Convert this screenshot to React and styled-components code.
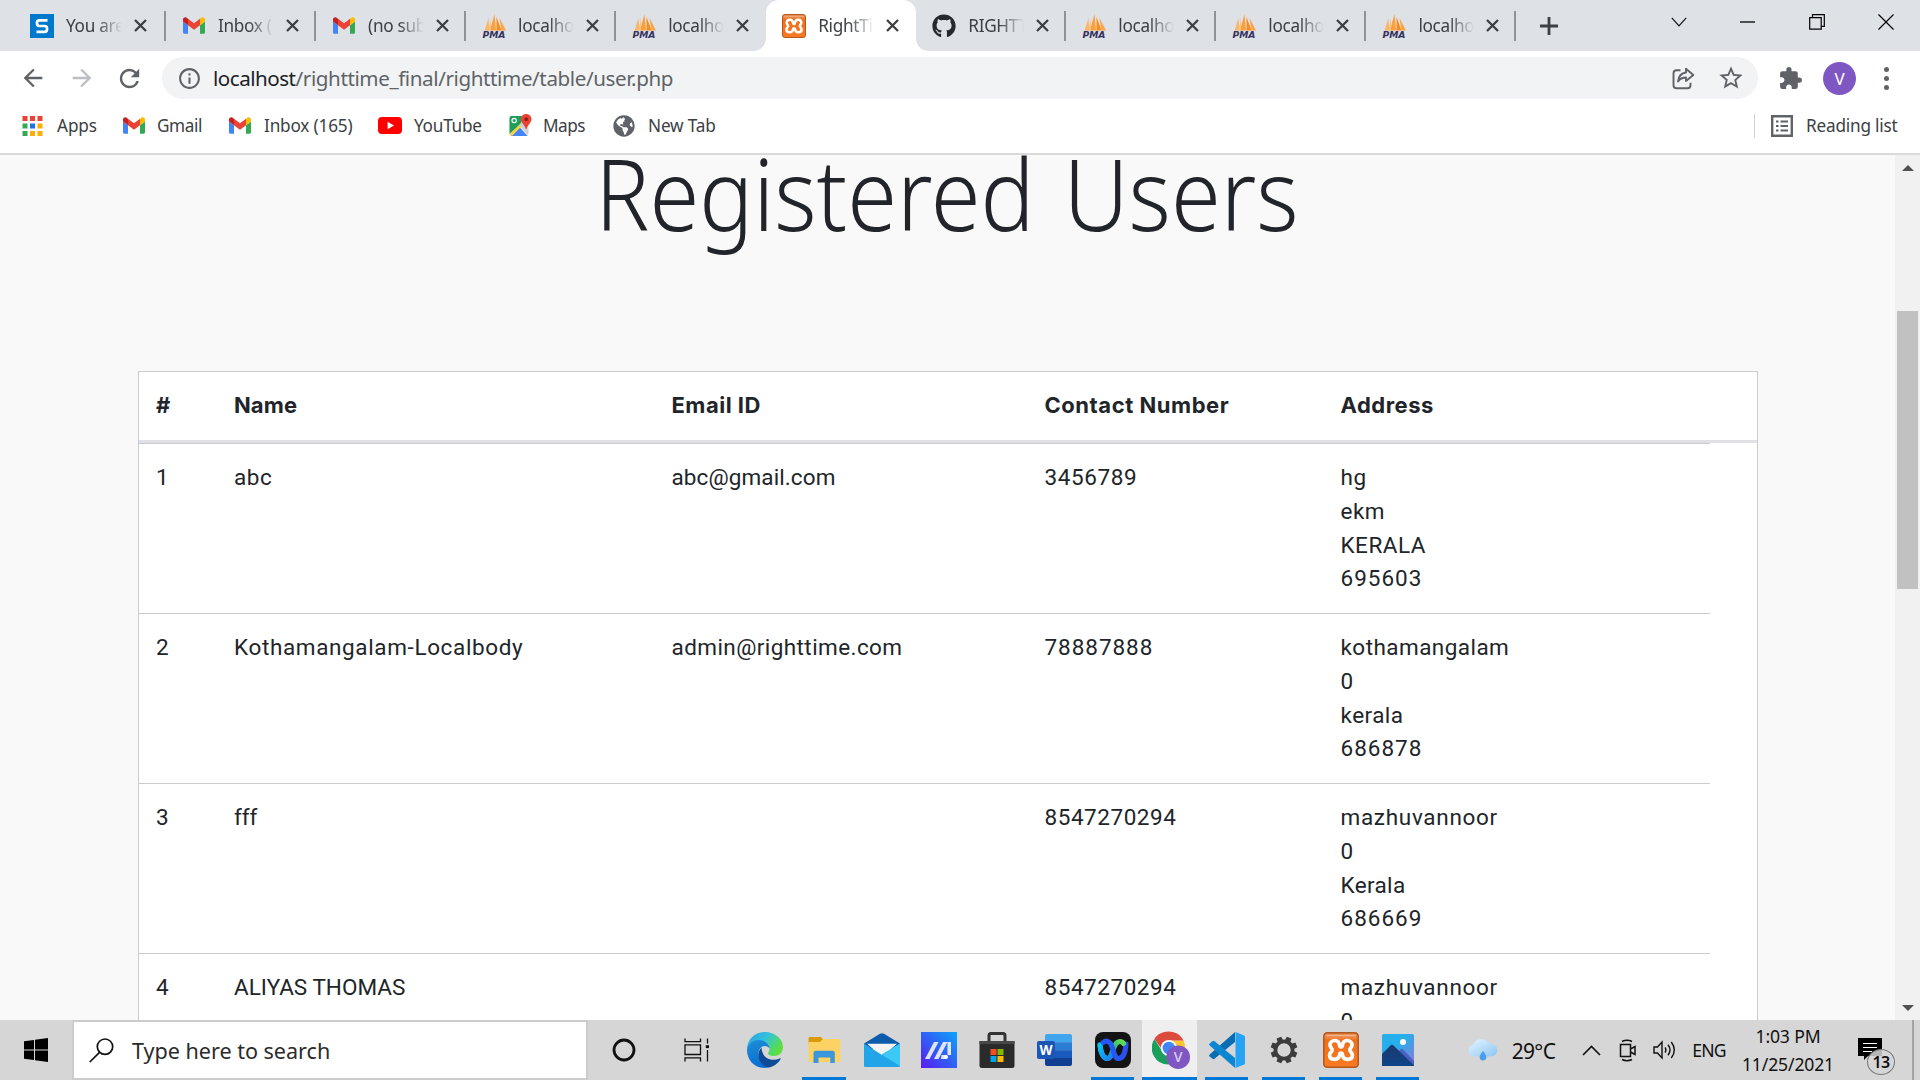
import React from "react";
import styled, { createGlobalStyle } from "styled-components";
import { FaGithub, FaGlobeAmericas } from "react-icons/fa";
import {
  MdArrowBack,
  MdArrowForward,
  MdRefresh,
  MdInfoOutline,
  MdStarBorder,
  MdExtension,
} from "react-icons/md";

const UI = `"Noto Sans", "Open Sans", sans-serif`;

const GlobalStyle = createGlobalStyle`
  * { box-sizing: border-box; }
  body { margin: 0; background: #fff; overflow: hidden; }
  svg { display: block; flex: none; }
`;

const Screen = styled.div`
  width: 1920px;
  height: 1080px;
  display: flex;
  flex-direction: column;
  overflow: hidden;
  font-family: ${UI};
`;

/* ---------- tab strip ---------- */
const TabStrip = styled.header`
  height: 51px;
  flex: none;
  display: flex;
  padding-left: 14px;
  background: #dee1e6;
`;
const Tab = styled.div`
  position: relative;
  width: ${(p) => (p.$first ? 152 : 150.05)}px;
  height: 51px;
  display: flex;
  align-items: center;
  padding-left: 15.5px;
  background: ${(p) => (p.$active ? "#fff" : "transparent")};
  border-radius: 13px 13px 0 0;
  &::before, &::after {
    content: "";
    display: ${(p) => (p.$active ? "block" : "none")};
    position: absolute;
    bottom: 0;
    width: 12px;
    height: 12px;
  }
  &::before { left: -12px; background: radial-gradient(circle at 0 0, transparent 11.5px, #fff 12px); }
  &::after { right: -12px; background: radial-gradient(circle at 100% 0, transparent 11.5px, #fff 12px); }
`;
const TabTitle = styled.span`
  width: 56px;
  margin-left: 12.5px;
  overflow: hidden;
  white-space: nowrap;
  font-size: 17.2px;
  line-height: 30px;
  letter-spacing: -0.3px;
  color: #3c4043;
  mask-image: linear-gradient(90deg, #000 55%, transparent 100%);
`;
const TabClose = styled.span`
  width: 13px;
  margin-left: 12px;
`;
const TabDivider = styled.span`
  width: 2px;
  height: 30px;
  margin-left: auto;
  background: ${(p) => (p.$show ? "#8f9296" : "transparent")};
`;
const NewTab = styled.div`
  width: 70px;
  display: flex;
  align-items: center;
  padding-left: 23px;
`;
const WindowControls = styled.div`
  margin-left: auto;
  display: flex;
  height: 43px;
  align-items: center;
`;
const WindowButton = styled.div`
  width: 69px;
  display: flex;
  justify-content: center;
`;

/* ---------- toolbar ---------- */
const Toolbar = styled.div`
  height: 54px;
  flex: none;
  display: flex;
  align-items: center;
  background: #fff;
  color: #5f6368;
`;
const NavButton = styled.div`
  width: ${(p) => p.$w || 49}px;
  display: flex;
  justify-content: center;
  color: ${(p) => (p.$off ? "#bcbec1" : "#5f6368")};
`;
const NavGroup = styled.div`
  width: 162px;
  display: flex;
  padding-left: 8px;
`;
const Omnibox = styled.div`
  width: 1596px;
  height: 42px;
  display: flex;
  align-items: center;
  padding: 0 13px 0 15px;
  border-radius: 21px;
  background: #f1f3f4;
`;
const Url = styled.div`
  flex: 1;
  margin-left: 11px;
  font-size: 20.6px;
  line-height: 30px;
  letter-spacing: -0.4px;
  color: #5f6368;
  b { font-weight: 400; color: #202124; letter-spacing: -0.5px; }
`;
const OmniActions = styled.div`
  display: flex;
  align-items: center;
  gap: 22px;
`;
const Avatar = styled.div`
  width: 33px;
  height: 33px;
  margin-left: 20px;
  border-radius: 50%;
  background: #7e57c2;
  color: #fff;
  font: 17px/33px ${UI};
  text-align: center;
`;
const ToolbarEnd = styled.div`
  display: flex;
  align-items: center;
  padding-left: 20px;
`;
const Kebab = styled.div`
  margin-left: 28px;
  display: grid;
  gap: 4px;
  i { width: 5px; height: 5px; border-radius: 50%; background: #5f6368; }
`;

/* ---------- bookmarks ---------- */
const BookmarkBar = styled.nav`
  height: 50px;
  flex: none;
  display: flex;
  align-items: center;
  padding: 0 0 7px 22px;
  border-bottom: 2px solid #dadada;
  background: #fff;
`;
const Bookmark = styled.div`
  width: ${(p) => p.$w}px;
  display: flex;
  align-items: center;
  gap: ${(p) => p.$gap || 12}px;
  white-space: nowrap;
  font-size: 17.2px;
  line-height: 26px;
  letter-spacing: ${(p) => p.$ls || -0.5}px;
  color: #3c4043;
`;
const BarDivider = styled.span`
  width: 1.5px;
  height: 24px;
  margin: 0 16px 0 auto;
  background: #d0d2d6;
`;

/* ---------- page ---------- */
const Viewport = styled.main`
  height: 865px;
  flex: none;
  display: flex;
  overflow: hidden;
  background: #f9f9f9;
`;
const Page = styled.div`
  width: 1895px;
  height: 865px;
  overflow: hidden;
  display: flex;
  flex-direction: column;
  align-items: center;
`;
const PageTitle = styled.h1`
  flex: none;
  margin: -12px 0 128px -1px;
  font-weight: 300;
  font-size: 99px;
  line-height: 100px;
  white-space: nowrap;
  word-spacing: 6px;
  color: #212529;
  transform: scaleX(0.911);
`;
const TableCard = styled.section`
  flex: none;
  width: 1620px;
  height: 900px;
  margin-left: 1px;
  border: 1px solid #ccc;
  background: #fff;
  font-family: Roboto, sans-serif;
  font-size: 22.5px;
  line-height: 33.75px;
  color: #212529;
`;
const Columns = styled.div`
  display: grid;
  grid-template-columns: 78px 437.5px 373px 296px 386px;
`;
const HeadRow = styled(Columns)`
  height: 71px;
  border-bottom: 3px solid #dee2e6;
  font-family: Inter, Roboto, sans-serif;
  font-weight: 700;
  font-size: 22px;
`;
const BodyRow = styled(Columns)`
  width: 1571px;
  height: 170px;
  border-top: 1px solid #c9cbcd;
`;
const Cell = styled.div`
  padding: 17px 0 0 17px;
  letter-spacing: ${(p) => p.$ls ?? 0}px;
  white-space: nowrap;
`;
const Line = styled.div`
  letter-spacing: ${(p) => p.$ls ?? 0.5}px;
`;

const ScrollBar = styled.aside`
  width: 25px;
  display: flex;
  flex-direction: column;
  align-items: center;
  background: #f1f1f1;
`;
const ScrollArrow = styled.span`
  width: 0;
  height: 0;
  border: 6px solid transparent;
  border-top-width: ${(p) => (p.$down ? 6 : 0)}px;
  border-bottom-width: ${(p) => (p.$down ? 0 : 6)}px;
  border-${(p) => (p.$down ? "top" : "bottom")}-color: #505050;
  margin: ${(p) => (p.$down ? "auto 0 9px" : "10px 0 0")};
`;
const ScrollThumb = styled.span`
  width: 21px;
  height: 278px;
  margin-top: 140px;
  background: #c1c1c1;
`;

/* ---------- taskbar ---------- */
const Taskbar = styled.footer`
  height: 60px;
  flex: none;
  display: flex;
  background: #d6d6d6;
`;
const TaskSlot = styled.div`
  width: ${(p) => p.$w || 58}px;
  height: 60px;
  display: flex;
  align-items: center;
  justify-content: center;
  background: ${(p) => (p.$focused ? "#efefef" : "transparent")};
`;
const RunningSlot = styled(TaskSlot)`
  margin: 0 ${(p) => (p.$focused ? 1 : 7)}px;
  width: ${(p) => (p.$focused ? 55 : p.$w || 43)}px;
  border-bottom: 3px solid #0078d7;
  padding: 3px 0 0 ${(p) => (p.$focused ? 2 : 0)}px;
`;
const SearchBox = styled.div`
  width: 516px;
  height: 60px;
  display: flex;
  align-items: center;
  gap: 18px;
  padding: 1px 0 0 15px;
  border: 2px solid #ccc;
  background: #fff;
  font-size: 21.6px;
  letter-spacing: -0.03px;
  color: #2b2b2b;
`;
const Tray = styled.div`
  margin-left: auto;
  display: flex;
  align-items: center;
  color: #111;
`;
const TrayItem = styled.div`
  width: ${(p) => p.$w}px;
  display: flex;
  justify-content: center;
  padding-top: ${(p) => p.$drop || 0}px;
  font-size: ${(p) => p.$size || 17.6}px;
  letter-spacing: ${(p) => p.$ls || -0.5}px;
  white-space: nowrap;
`;
const Clock = styled.div`
  width: 110px;
  font-size: 17.6px;
  line-height: 28px;
  text-align: center;
  letter-spacing: -0.15px;
`;
const Notices = styled.div`
  position: relative;
  width: 69px;
  height: 60px;
  padding: 17px 0 0 15px;
`;
const NoticeCount = styled.span`
  position: absolute;
  left: 24px;
  top: 29px;
  width: 28px;
  height: 26px;
  border: 1px solid #777;
  border-radius: 50%;
  background: rgba(214, 214, 214, 0.85);
  font: 600 16px/24px ${UI};
  letter-spacing: -0.6px;
  text-align: center;
`;
const DesktopEdge = styled.span`
  width: 8px;
  height: 60px;
  border-left: 2px solid #a3a3a3;
`;

/* ---------- icons ---------- */
const SIcon = () => (
  <svg width="24" height="24" viewBox="0 0 24 24">
    <path fill="#0078cb" d="M0 0h24v24H0z" />
    <path d="M17.5 6.3H9.2Q7 6.3 7 8.6v1Q7 12 9.2 12h5.4q2.4 0 2.4 2.2v1.3q0 2.3-2.4 2.3H6.5" fill="none" stroke="#fff" strokeWidth="2.7" />
  </svg>
);
const GmailIcon = () => (
  <svg width="22" height="17" viewBox="52 42 88 66">
    <path fill="#4285f4" d="M58 108h14V74L52 59v43c0 3.3 2.7 6 6 6" />
    <path fill="#34a853" d="M120 108h14c3.3 0 6-2.7 6-6V59l-20 15" />
    <path fill="#fbbc04" d="M120 48v26l20-15v-8c0-7.400-8.500-11.700-14.400-7.200" />
    <path fill="#ea4335" d="M72 74V48l24 18 24-18v26L96 92" />
    <path fill="#c5221f" d="M52 51v8l20 15V48l-5.600-4.200C60.500 39.300 52 43.600 52 51" />
  </svg>
);
const PmaIcon = () => (
  <svg width="24" height="24" viewBox="0 0 24 24">
    <path fill="#fbb667" d="M6.500 4 2.500 16.500h5z" />
    <path fill="#f9a03c" d="M12.500 0 8 16.500h6z" />
    <path fill="#fdc27a" d="M9 4 6.500 16.500H9z" />
    <path fill="#f98c1a" d="M14.500 3v13.500h5z" />
    <path fill="#fba445" d="M17.500 4 19.500 16.500h4.500z" />
    <text x=".5" y="24" fontFamily="'DejaVu Sans', sans-serif" fontSize="8.500" fontWeight="700" fontStyle="italic" textLength="23" lengthAdjust="spacingAndGlyphs" fill="#34325e">PMA</text>
  </svg>
);
const XamppIcon = ({ size = 36 }) => (
  <svg width={size} height={size} viewBox="0 0 36 36">
    <defs>
      <linearGradient id="xa" x1="0" y1="0" x2="0" y2="1">
        <stop offset="0" stopColor="#d9814a" />
        <stop offset=".16" stopColor="#f0863f" />
        <stop offset=".2" stopColor="#ee6f1a" />
        <stop offset="1" stopColor="#fb7a24" />
      </linearGradient>
    </defs>
    <rect x=".75" y=".75" width="34.500" height="34.500" rx="3.500" fill="url(#xa)" stroke="#b5581b" strokeWidth="1.500" />
    <path d="M4 3.500h28" stroke="#f5b48a" strokeWidth="1.600" strokeLinecap="round" />
    <path d="M18 14.800C17.200 15 16.800 14.500 16.500 13 16 9.500 14.500 8.500 12 8.500 9 8.500 7 10.500 7 13 7 15.500 9.200 16.200 9.200 18S6.600 20.500 6.600 23.200C6.600 25.800 8.500 27.300 11.500 27.300 14.500 27.300 16 26 16.500 23 16.800 21.500 17.200 21.200 18 21.200S19.200 21.500 19.500 23C20 26 21.500 27.300 24.500 27.300 27.500 27.300 29.400 25.800 29.400 23.200 29.400 20.500 26.800 19.800 26.800 18S29 15.500 29 13C29 10.500 27 8.500 24 8.500 21.500 8.500 20 9.500 19.500 13 19.200 14.500 18.800 15 18 14.800Z" fill="none" stroke="#fff" strokeWidth="3.700" strokeLinejoin="round" />
  </svg>
);
const CloseIcon = () => (
  <svg width="13" height="13" viewBox="0 0 13 13">
    <path d="m1 1 11 11M12 1 1 12" stroke="#3c4043" strokeWidth="2.300" />
  </svg>
);
const AppsIcon = () => (
  <svg width="21" height="20" viewBox="0 0 21 20">
    {["#ea4335", "#ea4335", "#ea4335", "#34a853", "#1a73e8", "#fbaf05", "#34a853", "#fbaf05", "#fbaf05"].map((c, i) => (
      <rect key={i} x={0.5 + (i % 3) * 7.5} y={Math.floor(i / 3) * 7.5} width="5" height="5" fill={c} />
    ))}
  </svg>
);
const YouTubeIcon = () => (
  <svg width="24" height="17" viewBox="0 0 24 17">
    <rect width="24" height="17" rx="4" fill="#f00" />
    <path d="m9.600 4.800 6.400 3.700-6.400 3.700z" fill="#fff" />
  </svg>
);
const MapsIcon = () => (
  <svg width="23" height="23" viewBox="0 0 23 23">
    <rect x=".5" y="2" width="19" height="20" rx="2" fill="#e8eaed" />
    <path d="M.5 4q0-2 2-2H14l-2 8L.5 20z" fill="#1e9e58" />
    <path d="M1.500 22 10 12.500l8.500 9.500z" fill="#4285f4" />
    <path d="m.5 20.500 13-13 1.800 2L3 22z" fill="#fdd33c" />
    <path d="M10.500 11.500 19 21l.500-6-6-7z" fill="#cfd2d6" />
    <circle cx="5.200" cy="6.500" r="2.200" fill="none" stroke="#fff" strokeWidth="1.200" />
    <path d="M17.200 0c3 0 5.300 2.200 5.300 5.200 0 3.500-3.500 5-5 9.800h-.6c-1.500-4.800-5-6.300-5-9.800C11.900 2.200 14.200 0 17.200 0" fill="#ea4335" />
    <circle cx="17.200" cy="5.200" r="1.900" fill="#8c1f17" />
  </svg>
);
const ReadingIcon = () => (
  <svg width="22" height="22" viewBox="0 0 22 22" fill="none" stroke="#5f6368">
    <path d="M1.200 1.200h19.600v19.600H1.200z" strokeWidth="2.400" />
    <path d="M5 6.500h2.500M5 11h2.500M5 15.500h2.500M9.500 6.500H17M9.500 11H17M9.500 15.500H17" strokeWidth="2.200" />
  </svg>
);
const ShareIcon = () => (
  <svg width="23" height="23" viewBox="0 0 23 23" fill="none" stroke="#5f6368" strokeWidth="1.900" strokeLinejoin="round">
    <path d="M8.500 3.200H4.500Q1.500 3.200 1.500 6.200v12q0 3 3 3h11q3 0 3-3v-2.500" />
    <path d="M14 1.800 21.300 8 14 14v-3.500c-3.800 0-6 1.100-8 4C6.600 9.400 9.300 6 14 5.500z" />
  </svg>
);
const WindowsIcon = () => (
  <svg width="24" height="24" viewBox="0 0 24 24">
    <path d="m0 3.300 10-1.400v9.500H0zM11 1.700 24 0v11.400H11zM0 12.400h10v9.600L0 20.700zM11 12.400h13V24l-13-1.800z" />
  </svg>
);
const SearchIcon = () => (
  <svg width="25" height="25" viewBox="0 0 25 25" fill="none" stroke="#111" strokeWidth="1.700">
    <circle cx="16" cy="8.700" r="7.700" />
    <path d="M10.500 14.300.8 24" />
  </svg>
);
const TaskViewIcon = () => (
  <svg width="26" height="24" viewBox="0 0 26 24" fill="none" stroke="#111" strokeWidth="1.300">
    <path d="M1 .5v3.200h15.500V.5M1 6.800h15.500v9.700H1zM1 23.500v-3.700h15.500v3.700M23.500.5v5M23.500 12v11.500" />
    <path d="M21.800 7.200h3.200v2.900h-3.200z" fill="#111" stroke="none" />
  </svg>
);
const EdgeIcon = () => (
  <svg width="36" height="36" viewBox="0 0 36 36">
    <defs>
      <linearGradient id="eg" x1="0" y1="0" x2="1" y2=".5">
        <stop offset="0" stopColor="#2a9de0" /><stop offset=".5" stopColor="#33c1e0" /><stop offset="1" stopColor="#5be03f" />
      </linearGradient>
      <linearGradient id="eb" x1="0" y1="0" x2=".4" y2="1">
        <stop offset="0" stopColor="#1f8fd8" /><stop offset="1" stopColor="#0a6fd0" />
      </linearGradient>
    </defs>
    <path d="M0 18C0 7 8 0 18 0s18 7 18 15c0 5-3.500 9-9 9-4 0-6-1.500-6-2.800 0-.9 1.500-1.500 1.500-4.200 0-4-4-7.500-9-7.500C7 9.500 1.500 13 0 18" fill="url(#eg)" />
    <path d="M0 18c.5-5.500 5.500-10 12-10 6 0 10.500 4.500 10.500 8.500 0 0-1.500-2.500-4.500-2.500-4 0-6.500 3.500-6.500 8 0 6 4.500 11 10 13.500C9.500 38 0 29.500 0 18" fill="url(#eb)" />
    <path d="M14.500 15.500c-6 6-3 18 7 20 5-.8 9.500-4 12-8.300.4-.8-.2-1.200-.9-.8C25 30 15 26.500 14.500 15.500" fill="#0f4b96" />
  </svg>
);
const FolderIcon = () => (
  <svg width="33" height="26" viewBox="0 0 33 26">
    <path d="M.5 1.500Q.5 0 2 0h11l2 2.500V8H.5z" fill="#dc9a08" />
    <path d="M.5 5h11.500l3-3H31q1.500 0 1.500 1.500v20Q32.500 25 31 25H2Q.5 25 .5 23.500z" fill="#fdd264" />
    <path d="M5.500 26V16q0-2.300 2.300-2.300h16.700q2.300 0 2.300 2.300v10h-4.500v-5.500H10.500V26z" fill="#3a96dd" />
  </svg>
);
const MailIcon = () => (
  <svg width="36" height="34" viewBox="0 0 36 34">
    <path d="M0 10.500 16 .8q2-1.200 4 0l16 9.700L32 16H4z" fill="#0c5cab" />
    <path d="M3 10.800h30L20 22h-4z" fill="#f4f4f4" />
    <path d="M0 10.500 18 22l18-11.500V33q0 1-1 1H1q-1 0-1-1z" fill="#22a5e8" />
    <path d="M36 10.500 17.500 21.500 36 33z" fill="#3cc9f5" />
  </svg>
);
const AsusIcon = () => (
  <svg width="36" height="36" viewBox="0 0 36 36">
    <defs>
      <linearGradient id="as" x1="0" y1="1" x2="1" y2="0">
        <stop offset="0" stopColor="#5b1af0" /><stop offset=".5" stopColor="#3060f5" /><stop offset="1" stopColor="#0ba4fb" />
      </linearGradient>
    </defs>
    <path d="M0 0h36v36H0z" fill="url(#as)" />
    <path d="m4 27 9-17h4.500L8.500 27zM13 27l9-17h4.500l-9 17zM26.500 10h3.500v13h-3.500zM20.500 23h5v4H20z" fill="#dde5ff" />
    <circle cx="25" cy="25" r="2" fill="#fff" />
  </svg>
);
const StoreIcon = () => (
  <svg width="36" height="36" viewBox="0 0 36 36">
    <path d="M10 10V3.500Q10 1.500 12 1.500h12q2 0 2 2V10" fill="none" stroke="#333" strokeWidth="3" />
    <path d="M.5 9h35v24.500Q35.500 36 33 36H3Q.5 36 .5 33.500z" fill="#2b2b2b" />
    <path d="M.5 9h35v3H.5z" fill="#484848" />
    <path d="M11.500 17h6v6h-6z" fill="#f25022" /><path d="M18.500 17h6v6h-6z" fill="#7fba00" />
    <path d="M11.500 24h6v6h-6z" fill="#00a4ef" /><path d="M18.500 24h6v6h-6z" fill="#ffb900" />
  </svg>
);
const WordIcon = () => (
  <svg width="36" height="33" viewBox="0 0 36 33">
    <path d="M8 2q0-2 2-2h23q2 0 2 2v6.500H8z" fill="#41a5ee" /><path d="M8 8.300h27v8H8z" fill="#2b7cd3" />
    <path d="M8 16.200h27v8H8z" fill="#185abd" /><path d="M8 24h27v6q0 2-2 2H10q-2 0-2-2z" fill="#103f91" />
    <rect y="7" width="18" height="18" rx="1.800" fill="#1c56b4" />
    <text x="9" y="21" textAnchor="middle" fontFamily="'Open Sans', sans-serif" fontSize="13.500" fontWeight="700" fill="#fff">W</text>
  </svg>
);
const WebexIcon = () => (
  <svg width="36" height="36" viewBox="0 0 36 36">
    <defs>
      <linearGradient id="w1" x1="0" y1="0" x2="1" y2="1"><stop offset="0" stopColor="#07c3f5" /><stop offset="1" stopColor="#1b7bf0" /></linearGradient>
      <linearGradient id="w2" x1="0" y1="1" x2="1" y2="0"><stop offset="0" stopColor="#1fa7e8" /><stop offset=".6" stopColor="#2bb58a" /><stop offset="1" stopColor="#63e04f" /></linearGradient>
    </defs>
    <rect width="36" height="36" rx="8" fill="#141414" />
    <path d="M31 12c-.5 8-3 14.500-7.500 14.500" fill="none" stroke="#2a50ef" strokeWidth="5" strokeLinecap="round" />
    <path d="M5 13c.5 7 3 13.500 7.500 13.500C18 26.500 17 10 25 9.500c1.500 0 2.500.5 3.500 2" fill="none" stroke="url(#w2)" strokeWidth="5" strokeLinecap="round" />
    <path d="M5 13c.5 7 3 13.500 7.500 13.500 3 0 4.500-4 5.500-8" fill="none" stroke="url(#w1)" strokeWidth="5" strokeLinecap="round" />
    <path d="M8 10.500c2.500-2 5-1.500 7 .5 3.500 4 3.500 15.500 8.500 15.500" fill="none" stroke="#2458f2" strokeWidth="5" strokeLinecap="round" />
  </svg>
);
const ChromeIcon = () => (
  <svg width="38" height="38" viewBox="0 0 38 38">
    <path d="M31.500 9.500A16.500 16.500 0 0 1 16.500 33.500L24 21l-7-11.500z" fill="#fdc52f" />
    <path d="M2.500 8A16.500 16.500 0 0 0 16.500 33.500L22 24 10 20z" fill="#1a9f5c" />
    <path d="M2.500 8C7-1 25-3.500 31.500 9.500H17L9 17z" fill="#dd4b3e" />
    <circle cx="16.800" cy="17" r="8" fill="#fff" />
    <circle cx="16.800" cy="17" r="6.200" fill="#4285f4" />
    <circle cx="26.200" cy="26.200" r="11.800" fill="#7e57c2" />
    <text x="26.200" y="31.200" textAnchor="middle" fontFamily="'Open Sans', sans-serif" fontSize="14" fontWeight="600" fill="#dccdf2">V</text>
  </svg>
);
const CodeIcon = () => (
  <svg width="36" height="36" viewBox="0 0 36 36">
    <path d="M26 0v10L5.500 26.800q-1 .8-2 0L.7 24.500q-1-1 0-2z" fill="#0a6cb4" />
    <path d="M26 36V26L5.500 9.200q-1-.8-2 0L.7 11.500q-1 1 0 2z" fill="#0b87d2" />
    <path d="M26.500 0 35 3.500q1 .5 1 1.600v25.800q0 1.100-1 1.600L26.500 36z" fill="#26a3f3" />
  </svg>
);
const GearIcon = () => (
  <svg width="28" height="28" viewBox="-14 -14 28 28">
    {[22.5, 67.5, 112.5, 157.5, 202.5, 247.5, 292.5, 337.5].map((a) => (
      <path key={a} d="M-3-8.500-2.500-13.400h5l.5 4.900z" transform={`rotate(${a})`} fill="#3c3c3c" />
    ))}
    <circle r="8.600" fill="none" stroke="#3c3c3c" strokeWidth="3.800" />
  </svg>
);
const PhotosIcon = () => (
  <svg width="32" height="32" viewBox="0 0 32 32">
    <defs>
      <linearGradient id="ph" x1="0" y1="0" x2="1" y2="1"><stop offset=".4" stopColor="#27aeec" /><stop offset="1" stopColor="#8b79d6" /></linearGradient>
      <linearGradient id="pm" x1="0" y1="0" x2="0" y2="1"><stop offset="0" stopColor="#1a3a6d" /><stop offset="1" stopColor="#10448a" /></linearGradient>
    </defs>
    <rect width="32" height="32" rx="1.500" fill="url(#ph)" />
    <path d="m16 18 2.500-2.500q1.300-1 2.500 0L32 27v5H20z" fill="#4a5fc0" />
    <path d="M0 20 8.500 11.500q1.500-1.300 3 0L32 31.500V32H0z" fill="url(#pm)" />
    <circle cx="21" cy="8" r="3" fill="#fff" />
  </svg>
);
const WeatherIcon = () => (
  <svg width="32" height="24" viewBox="0 0 32 24">
    <defs><linearGradient id="we" x1="0" y1="0" x2="1" y2="1"><stop offset="0" stopColor="#e6f6ff" /><stop offset="1" stopColor="#8cc6f2" /></linearGradient></defs>
    <path d="M6.500 18.500a6 6 0 0 1-.5-11.700A9 9 0 0 1 22 5.500a6.500 6.500 0 0 1 3.500 12.800z" fill="url(#we)" />
    <path d="M16 13q4.500 5 3 8-3 3-6 0-1.500-3 3-8" fill="#4b9cec" />
  </svg>
);
const ChevronUp = () => (
  <svg width="19" height="11" viewBox="0 0 19 11"><path d="m1 10 8.500-8.500L18 10" fill="none" stroke="#111" strokeWidth="1.600" /></svg>
);
const MeetIcon = () => (
  <svg width="18" height="23" viewBox="0 0 18 23" fill="none" stroke="#111" strokeWidth="1.500">
    <path d="M1.500 5.500h10v12h-10zM11.500 10l4.500-2.500v8L11.500 13M3 2.500Q8 0 13 2.500M3 20.500q5 2.500 10 0" />
  </svg>
);
const VolumeIcon = () => (
  <svg width="23" height="20" viewBox="0 0 23 20" fill="none" stroke="#111" strokeWidth="1.400">
    <path d="M1 7h3.500L9 2v16l-4.500-5H1zM12 7.500q1.800 2.500 0 5M15 4.800q4 5.200 0 10.400M18.300 2q6 8 0 16" />
  </svg>
);
const NoticeIcon = () => (
  <svg width="24" height="24" viewBox="0 0 24 24">
    <path d="M0 1h24v18H10l-4 4v-4H0z" />
    <path d="M5 6.500h14M5 10.500h14M5 14.500h9" stroke="#fff" strokeWidth="1.200" />
  </svg>
);

/* ---------- data ---------- */
const tabs = [
  { title: "You are", icon: <SIcon />, divider: true },
  { title: "Inbox (1", icon: <GmailIcon />, divider: true },
  { title: "(no subj", icon: <GmailIcon />, divider: true },
  { title: "localhos", icon: <PmaIcon />, divider: true },
  { title: "localhos", icon: <PmaIcon /> },
  { title: "RightTim", icon: <XamppIcon size={24} />, active: true },
  { title: "RIGHTTI", icon: <FaGithub size={24} color="#24292f" />, divider: true },
  { title: "localhos", icon: <PmaIcon />, divider: true },
  { title: "localhos", icon: <PmaIcon />, divider: true },
  { title: "localhos", icon: <PmaIcon />, divider: true },
];
const TabIcon = styled.span`
  width: 24px;
  display: flex;
  justify-content: center;
`;

const headings = [
  ["#", 0],
  ["Name", 0.1],
  ["Email ID", 0.5],
  ["Contact Number", 0.55],
  ["Address", 0.5],
];

/* each text is paired with its letter spacing */
const rows = [
  {
    id: "1", name: ["abc", 0.6], email: ["abc@gmail.com", 0.1], phone: ["3456789", 0.62],
    address: [["hg"], ["ekm"], ["KERALA"], ["695603", 1]],
  },
  {
    id: "2", name: ["Kothamangalam-Localbody", 0.63], email: ["admin@righttime.com", 0.42], phone: ["78887888", 0.95],
    address: [["kothamangalam", 0.45], ["0"], ["kerala", 0.45], ["686878", 1]],
  },
  {
    id: "3", name: ["fff", -0.1], email: ["", 0], phone: ["8547270294", 0.55],
    address: [["mazhuvannoor", 0.7], ["0"], ["Kerala", 0.35], ["686669", 1]],
  },
  {
    id: "4", name: ["ALIYAS THOMAS", 0.02], email: ["", 0], phone: ["8547270294", 0.55],
    address: [["mazhuvannoor", 0.7], ["0"], ["Kerala", 0.35], ["686669", 1]],
  },
];

export default function App() {
  return (
    <Screen>
      <GlobalStyle />
      <TabStrip>
        {tabs.map((t, i) => (
          <Tab key={i} $active={t.active} $first={i === 0}>
            <TabIcon>{t.icon}</TabIcon>
            <TabTitle>{t.title}</TabTitle>
            <TabClose><CloseIcon /></TabClose>
            <TabDivider $show={t.divider} />
          </Tab>
        ))}
        <NewTab>
          <svg width="20" height="20" viewBox="0 0 20 20"><path d="M10 1v18M1 10h18" stroke="#3c4043" strokeWidth="2.800" /></svg>
        </NewTab>
        <WindowControls>
          <WindowButton><svg width="16" height="10" viewBox="0 0 16 10"><path d="m.8.8 7.200 8 7.200-8" fill="none" stroke="#111" strokeWidth="1.200" /></svg></WindowButton>
          <WindowButton><svg width="15" height="2" viewBox="0 0 15 2"><path d="M0 1h15" stroke="#000" strokeWidth="1.300" /></svg></WindowButton>
          <WindowButton><svg width="16" height="16" viewBox="0 0 16 16"><path d="M.7 3.700h11.500v11.500H.7zM3.500 3.500V.7h11.800v11.600h-3" fill="none" stroke="#000" strokeWidth="1.200" /></svg></WindowButton>
          <WindowButton><svg width="16" height="16" viewBox="0 0 16 16"><path d="m.5.5 15 15M15.500.5l-15 15" stroke="#000" strokeWidth="1.200" /></svg></WindowButton>
        </WindowControls>
      </TabStrip>

      <Toolbar>
        <NavGroup>
          <NavButton><MdArrowBack size={28} /></NavButton>
          <NavButton $off><MdArrowForward size={28} /></NavButton>
          <NavButton $w={47}><MdRefresh size={29} /></NavButton>
        </NavGroup>
        <Omnibox>
          <MdInfoOutline size={25} />
          <Url><b>localhost</b>/righttime_final/righttime/table/user.php</Url>
          <OmniActions>
            <ShareIcon />
            <MdStarBorder size={28} />
          </OmniActions>
        </Omnibox>
        <ToolbarEnd>
          <MdExtension size={25} />
          <Avatar>V</Avatar>
          <Kebab><i /><i /><i /></Kebab>
        </ToolbarEnd>
      </Toolbar>

      <BookmarkBar>
        <Bookmark $w={101} $gap={14} $ls={-0.1}><AppsIcon />Apps</Bookmark>
        <Bookmark $w={106} $ls={-0.4}><GmailIcon />Gmail</Bookmark>
        <Bookmark $w={149} $gap={13} $ls={-0.18}><GmailIcon />Inbox (165)</Bookmark>
        <Bookmark $w={131} $ls={-0.25}><YouTubeIcon />YouTube</Bookmark>
        <Bookmark $w={104} $gap={11} $ls={-0.5}><MapsIcon />Maps</Bookmark>
        <Bookmark $w={109} $gap={13} $ls={-0.15}><FaGlobeAmericas size={22} color="#5f6368" />New Tab</Bookmark>
        <BarDivider />
        <Bookmark $w={149} $gap={13} $ls={-0.2}><ReadingIcon />Reading list</Bookmark>
      </BookmarkBar>

      <Viewport>
        <Page>
          <PageTitle>Registered Users</PageTitle>
          <TableCard>
            <HeadRow>
              {headings.map(([text, ls]) => (
                <Cell key={text} $ls={ls}>{text}</Cell>
              ))}
            </HeadRow>
            {rows.map((r) => (
              <BodyRow key={r.id}>
                <Cell>{r.id}</Cell>
                <Cell $ls={r.name[1]}>{r.name[0]}</Cell>
                <Cell $ls={r.email[1]}>{r.email[0]}</Cell>
                <Cell $ls={r.phone[1]}>{r.phone[0]}</Cell>
                <Cell>
                  {r.address.map(([text, ls]) => (
                    <Line key={text} $ls={ls}>{text}</Line>
                  ))}
                </Cell>
              </BodyRow>
            ))}
          </TableCard>
        </Page>
        <ScrollBar>
          <ScrollArrow />
          <ScrollThumb />
          <ScrollArrow $down />
        </ScrollBar>
      </Viewport>

      <Taskbar>
        <TaskSlot $w={72}><WindowsIcon /></TaskSlot>
        <SearchBox><SearchIcon />Type here to search</SearchBox>
        <TaskSlot $w={72}>
          <svg width="24" height="24" viewBox="0 0 24 24"><circle cx="12" cy="12" r="10" fill="none" stroke="#111" strokeWidth="2.800" /></svg>
        </TaskSlot>
        <TaskSlot $w={74}><TaskViewIcon /></TaskSlot>
        <TaskSlot $w={61}><EdgeIcon /></TaskSlot>
        <RunningSlot $w={44}><FolderIcon /></RunningSlot>
        <TaskSlot $w={57}><MailIcon /></TaskSlot>
        <TaskSlot><AsusIcon /></TaskSlot>
        <TaskSlot><StoreIcon /></TaskSlot>
        <TaskSlot><WordIcon /></TaskSlot>
        <RunningSlot><WebexIcon /></RunningSlot>
        <RunningSlot $focused><ChromeIcon /></RunningSlot>
        <RunningSlot><CodeIcon /></RunningSlot>
        <RunningSlot><GearIcon /></RunningSlot>
        <RunningSlot><XamppIcon /></RunningSlot>
        <RunningSlot><PhotosIcon /></RunningSlot>
        <Tray>
          <TrayItem $w={31}><WeatherIcon /></TrayItem>
          <TrayItem $w={71} $size={21} $ls={-0.7} $drop={2}>29°C</TrayItem>
          <TrayItem $w={44}><ChevronUp /></TrayItem>
          <TrayItem $w={30}><MeetIcon /></TrayItem>
          <TrayItem $w={42}><VolumeIcon /></TrayItem>
          <TrayItem $w={48} $ls={-0.8}>ENG</TrayItem>
          <Clock>1:03 PM<br />11/25/2021</Clock>
          <Notices>
            <NoticeIcon />
            <NoticeCount>13</NoticeCount>
          </Notices>
          <DesktopEdge />
        </Tray>
      </Taskbar>
    </Screen>
  );
}
